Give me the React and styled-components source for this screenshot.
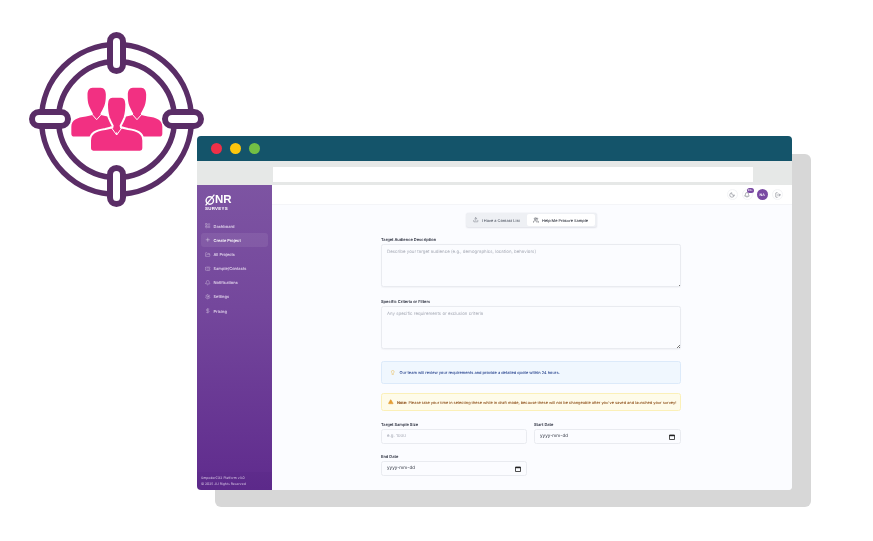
import React from 'react';
import styled, { createGlobalStyle } from 'styled-components';
import { LayoutList, Plus, FolderOpen, Ticket, Bell, Settings, DollarSign, Upload, Users, Moon, LogOut, Lightbulb, TriangleAlert } from 'lucide-react';

const Global = createGlobalStyle`
  html, body { margin: 0; padding: 0; background: #fff; }
  body { font-family: Inter, "Liberation Sans", sans-serif; text-rendering: geometricPrecision; }
  * { box-sizing: border-box; }
`;

const Stage = styled.div`
  position: relative;
  width: 873px;
  height: 541px;
  overflow: hidden;
  background: #fff;
`;
const Backdrop = styled.div`
  position: absolute;
  left: 215px;
  top: 154px;
  width: 596px;
  height: 353px;
  background: #d7d7d7;
  border-radius: 6px;
`;
const Win = styled.div`
  position: absolute;
  left: 197px;
  top: 136px;
  width: 595px;
  height: 354px;
  background: #fff;
  border-radius: 4px;
  overflow: hidden;
  display: flex;
  flex-direction: column;
`;
const TitleBar = styled.div`
  height: 25px;
  flex: none;
  background: #14546a;
  display: flex;
  align-items: center;
  gap: 8px;
  padding-left: 14px;
`;
const Dot = styled.span`
  width: 11px;
  height: 11px;
  border-radius: 50%;
  background: ${p => p.$c};
`;
const AddressBand = styled.div`
  height: 24px;
  flex: none;
  background: #e6e8e7;
  padding: 6px 39px 3px 76px;
`;
const Address = styled.div`
  height: 15px;
  background: #fff;
`;
const Body = styled.div`
  flex: 1;
  min-height: 0;
  display: flex;
  filter: blur(.3px);
`;
const Sidebar = styled.aside`
  width: 75px;
  flex: none;
  display: flex;
  flex-direction: column;
  background: linear-gradient(180deg, #7d54a2 0%, #74479c 40%, #5f2b8d 100%);
  color: #fff;
`;
const Logo = styled.div`
  padding: 9px 0 0 8px;
  height: 34px;
  flex: none;
  display: flex;
  flex-direction: column;
`;
const LogoMark = styled.div`
  display: flex;
  align-items: center;
  font-size: 11.5px;
  line-height: 12px;
  font-weight: 700;
  font-family: "Liberation Sans", sans-serif;
`;
const LogoSub = styled.div`
  font-size: 4.4px;
  line-height: 5px;
  font-weight: 700;
  letter-spacing: .28px;
  font-family: "Liberation Sans", sans-serif;
`;
const Nav = styled.nav`
  padding: 0 4px;
  display: flex;
  flex-direction: column;
  gap: .2px;
`;
const NavItem = styled.div`
  height: 14px;
  display: flex;
  align-items: center;
  gap: 3px;
  padding-left: 4px;
  font-size: 4px;
  font-weight: 500;
  border-radius: 3px;
  color: ${p => (p.$active ? '#fff' : '#e4d8ee')};
  background: ${p => (p.$active ? 'rgba(255,255,255,.08)' : 'transparent')};
`;
const SideFooter = styled.div`
  margin-top: auto;
  height: 18px;
  flex: none;
  padding: 3px 0 0 4px;
  font-size: 3.4px;
  line-height: 6px;
  color: #d8c8e6;
  background: rgba(60,20,110,.08);
`;
const Main = styled.div`
  flex: 1;
  min-width: 0;
  display: flex;
  flex-direction: column;
  background: #fbfcff;
`;
const Header = styled.header`
  height: 20px;
  flex: none;
  background: #fff;
  display: flex;
  align-items: center;
  justify-content: flex-end;
  gap: 4px;
  padding-right: 9px;
  border-bottom: 1px solid #f4f5f8;
`;
const HeadBtn = styled.span`
  position: relative;
  width: 11px;
  height: 11px;
  display: flex;
  align-items: center;
  justify-content: center;
  color: #555a66;
  border: .5px solid #f3f4f6;
  border-radius: 50%;
`;
const Badge = styled.span`
  position: absolute;
  left: 4px;
  top: -2.5px;
  width: 7.5px;
  height: 5px;
  border-radius: 2.5px;
  background: #7a4aa3;
  color: #fff;
  font-size: 2.6px;
  line-height: 5px;
  text-align: center;
`;
const Avatar = styled.span`
  width: 11.5px;
  height: 11.5px;
  border-radius: 50%;
  background: #7a4aa3;
  color: #fff;
  font-size: 3.6px;
  font-weight: 600;
  display: flex;
  align-items: center;
  justify-content: center;
`;
const Content = styled.div`
  flex: 1;
  min-height: 0;
  padding: 8px 2px 0 0;
  display: flex;
  flex-direction: column;
  align-items: center;
`;
const Tabs = styled.div`
  width: 131px;
  height: 14px;
  flex: none;
  display: flex;
  padding: 1px 2px 1px 1px;
  background: #eef0f4;
  border-radius: 2.5px;
  box-shadow: 0 .5px 1.5px rgba(40,40,70,.12);
`;
const Tab = styled.div`
  flex: ${p => (p.$active ? '0 0 68px' : '1')};
  display: flex;
  align-items: center;
  justify-content: center;
  gap: 3px;
  font-size: 3.9px;
  font-weight: 500;
  border-radius: 2px;
  color: ${p => (p.$active ? '#2b2f3a' : '#555b68')};
  background: ${p => (p.$active ? '#fff' : 'transparent')};
`;
const Form = styled.div`
  width: 300px;
  margin-top: 10px;
  display: flex;
  flex-direction: column;
`;
const Label = styled.label`
  display: block;
  font-size: 4px;
  line-height: 5px;
  font-weight: 600;
  color: #2d3140;
  margin-bottom: 2px;
`;
const AreaWrap = styled.div`
  position: relative;
  height: 43px;
  margin-bottom: 12px;
  &::after {
    content: '';
    position: absolute;
    right: 1px;
    bottom: 1px;
    width: 3px;
    height: 3px;
    background: linear-gradient(135deg, transparent 50%, #777 50%, #777 62%, transparent 62%, transparent 76%, #777 76%);
  }
`;
const TextArea = styled.textarea`
  display: block;
  width: 100%;
  height: 100%;
  resize: none;
  padding: 5px 5px;
  font: 400 4.4px/6px Inter, sans-serif;
  text-rendering: geometricPrecision;
  background: #fbfcff;
  border: .7px solid #e9ebf0;
  border-radius: 2.5px;
  box-shadow: 0 .5px 1px rgba(40,40,70,.04);
  outline: none;
  &::placeholder { color: #a9adb8; }
`;
const Notice = styled.div`
  display: flex;
  align-items: center;
  border-radius: 2.5px;
  border: .7px solid ${p => p.$border};
  background: ${p => p.$bg};
  color: ${p => p.$color};
  height: ${p => p.$h}px;
  margin-bottom: ${p => p.$mb}px;
  padding-left: ${p => p.$pl}px;
  gap: ${p => p.$gap}px;
  font-size: ${p => p.$size}px;
  font-weight: 500;
  white-space: nowrap;
`;
const Strong = styled.b`
  font-weight: 700;
`;
const Grid = styled.div`
  display: grid;
  grid-template-columns: 146px 147px;
  column-gap: 7px;
  row-gap: 10px;
`;
const Field = styled.div`
  display: flex;
  flex-direction: column;
`;
const Input = styled.input`
  display: block;
  width: 100%;
  height: 15px;
  padding: 0 5px;
  font: 400 4.4px Inter, sans-serif;
  text-rendering: geometricPrecision;
  color: #333844;
  background: #fbfcff;
  border: .7px solid #e9ebf0;
  border-radius: 2.5px;
  outline: none;
  &::placeholder { color: #a9adb8; }
`;
const DateBox = styled.div`
  height: 15px;
  padding: 0 5px;
  display: flex;
  align-items: center;
  justify-content: space-between;
  font-size: 4.6px;
  color: #333844;
  background: #fbfcff;
  border: .7px solid #e9ebf0;
  border-radius: 2.5px;
`;
const CalIcon = () => (
  <svg width="6" height="6" viewBox="0 0 6 6">
    <path d="M.5 1h5v4.5h-5z" fill="none" stroke="#222" strokeWidth=".8" />
    <path d="M.5 1h5v1.2h-5z" fill="#222" />
  </svg>
);
const LogoGlyph = () => (
  <svg width="10" height="12" viewBox="0 0 10 12">
    <circle cx="4.8" cy="6.5" r="3.7" fill="none" stroke="#fff" strokeWidth="1.4" />
    <path d="M.6 11.4L9.4 .6" stroke="#fff" strokeWidth="1.2" />
  </svg>
);

const Target = styled.svg`
  position: absolute;
  left: 0;
  top: 0;
  filter: blur(.25px);
`;
const Pill = ({ x, y, w, h }) => (
  <rect x={x} y={y} width={w} height={h} rx={Math.min(w, h) / 2} fill="#fff" stroke="#5a2d66" strokeWidth="6" />
);
const person = 'M-13 0H13C24 0 29 10 29 23C29 40 28 50 24 62C20 72 16 80 12 87L13 92L34 97C62 101 80 108 80 132V155Q80 165 70 165H-70Q-80 165-80 155V132C-80 108-62 101-34 97L-13 92L-12 87C-16 80-20 72-24 62C-28 50-29 40-29 23C-29 10-24 0-13 0Z';
const TargetIcon = () => (
  <Target width="240" height="240" viewBox="0 0 240 240">
    <circle cx="116.5" cy="119.5" r="75" fill="none" stroke="#5a2d66" strokeWidth="5.5" />
    <circle cx="116.5" cy="119.5" r="58" fill="none" stroke="#5a2d66" strokeWidth="5.5" />
    <Pill x={110} y={35} w={13} h={36} />
    <Pill x={110} y={168} w={13} h={36} />
    <Pill x={32} y={112} w={36} h={14} />
    <Pill x={165} y={112} w={36} h={14} />
    <g transform="translate(60 75) scale(.3333)">
      <path d={person} fill="#f23082" transform="translate(110 38) scale(.95 .89)" />
      <path d={person} fill="#f23082" transform="translate(231 38) scale(.95 .89)" />
      <path d="M96 118L110 134L124 118M217 118L231 134L245 118" fill="none" stroke="#fff" strokeWidth="3" />
      <path d={person} fill="#f23082" stroke="#fff" strokeWidth="6" transform="translate(170 65)" />
      <path d="M152 155L170 180L188 155M170 180V172" fill="none" stroke="#fff" strokeWidth="3" />
    </g>
  </Target>
);

const items = [
  [LayoutList, 'Dashboard'],
  [Plus, 'Create Project', true],
  [FolderOpen, 'All Projects'],
  [Ticket, 'Sample/Contacts'],
  [Bell, 'Notifications'],
  [Settings, 'Settings'],
  [DollarSign, 'Pricing'],
];

export default function App() {
  return (
    <Stage>
      <Global />
      <Backdrop />
      <Win>
        <TitleBar>
          <Dot $c="#ee3048" />
          <Dot $c="#fdc70c" />
          <Dot $c="#73bf44" />
        </TitleBar>
        <AddressBand><Address /></AddressBand>
        <Body>
          <Sidebar>
            <Logo>
              <LogoMark><LogoGlyph />NR</LogoMark>
              <LogoSub>SURVEYS</LogoSub>
            </Logo>
            <Nav>
              {items.map(([Icon, text, active]) => (
                <NavItem key={text} $active={active}>
                  <Icon size={5.5} strokeWidth={1.5} />
                  {text}
                </NavItem>
              ))}
            </Nav>
            <SideFooter>
              SmpoderCX2 Platform v3.0<br />© 2025 JU Rights Reserved
            </SideFooter>
          </Sidebar>
          <Main>
            <Header>
              <HeadBtn><Moon size={6} strokeWidth={1.8} /></HeadBtn>
              <HeadBtn><Bell size={6} strokeWidth={1.8} /><Badge>99+</Badge></HeadBtn>
              <Avatar>NA</Avatar>
              <HeadBtn><LogOut size={6} strokeWidth={1.8} /></HeadBtn>
            </Header>
            <Content>
              <Tabs>
                <Tab><Upload size={5.5} strokeWidth={1.8} />I Have a Contact List</Tab>
                <Tab $active><Users size={6} strokeWidth={1.8} />Help Me Procure Sample</Tab>
              </Tabs>
              <Form>
                <Label>Target Audience Description</Label>
                <AreaWrap><TextArea placeholder="Describe your target audience (e.g., demographics, location, behaviors)" /></AreaWrap>
                <Label>Specific Criteria or Filters</Label>
                <AreaWrap><TextArea placeholder="Any specific requirements or exclusion criteria" /></AreaWrap>
                <Notice $bg="#f0f7fe" $border="#dceafa" $color="#23408c" $h={23} $mb={9} $pl={8} $gap={4} $size={3.96}>
                  <Lightbulb size={5.5} color="#e8b23a" strokeWidth={2} />
                  Our team will review your requirements and provide a detailed quote within 24 hours.
                </Notice>
                <Notice $bg="#fefbe9" $border="#fbf0b8" $color="#8a4a12" $h={18} $mb={11} $pl={6} $gap={3.5} $size={3.9}>
                  <TriangleAlert size={5.5} color="#d98a1c" fill="#e9a43a" strokeWidth={1.5} />
                  <span><Strong>Note:</Strong> Please take your time in selecting these while in draft mode, because these will not be changeable after you've saved and launched your survey!</span>
                </Notice>
                <Grid>
                  <Field>
                    <Label>Target Sample Size</Label>
                    <Input placeholder="e.g. 1000" />
                  </Field>
                  <Field>
                    <Label>Start Date</Label>
                    <DateBox>yyyy-mm-dd<CalIcon /></DateBox>
                  </Field>
                  <Field>
                    <Label>End Date</Label>
                    <DateBox>yyyy-mm-dd<CalIcon /></DateBox>
                  </Field>
                </Grid>
              </Form>
            </Content>
          </Main>
        </Body>
      </Win>
      <TargetIcon />
    </Stage>
  );
}
